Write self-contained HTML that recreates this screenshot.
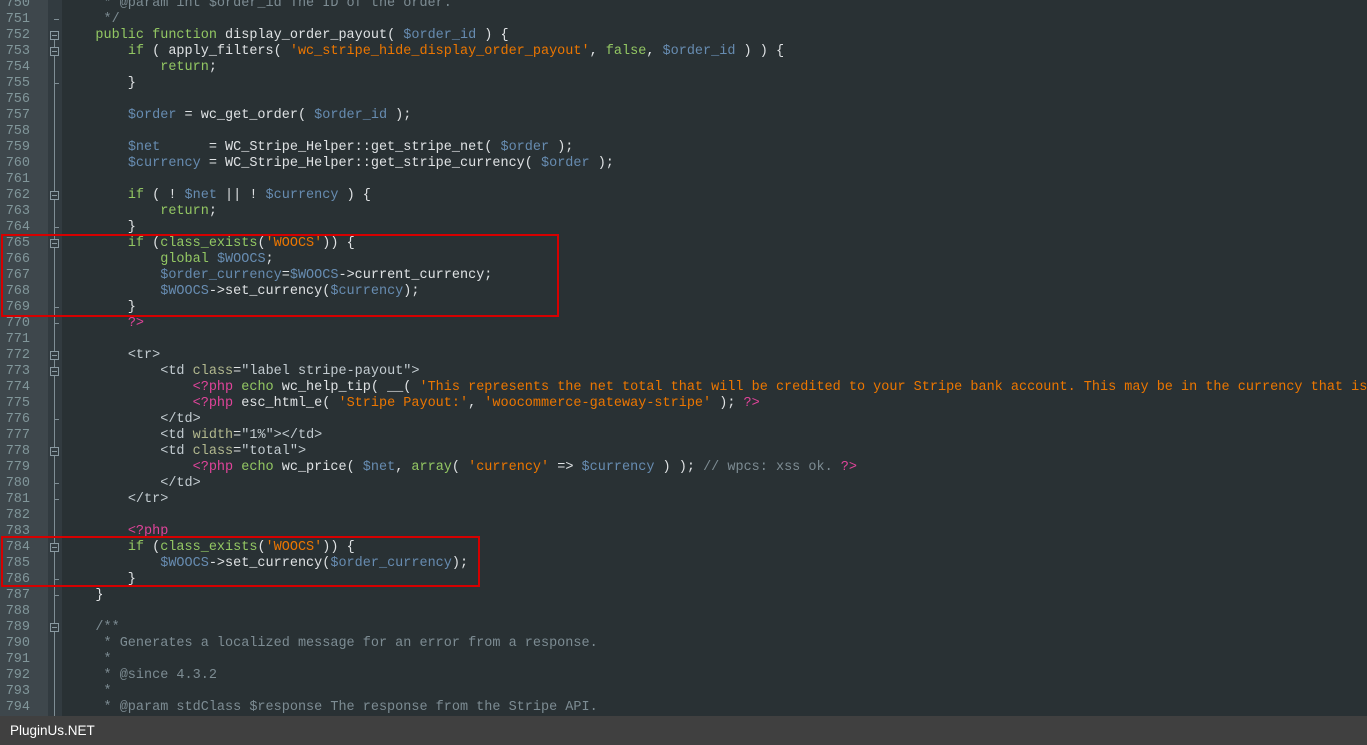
<!DOCTYPE html>
<html><head><meta charset="utf-8"><style>
body{margin:0;width:1367px;height:745px;overflow:hidden;background:#293134;position:relative;font-family:"Liberation Mono",monospace;font-size:13.5px}
.g1{position:absolute;left:0;top:0;width:48px;height:716px;background:#3e474c}
.g2{position:absolute;left:48px;top:0;width:14px;height:716px;background:#323b40}
.wrap{position:absolute;left:0;top:2px;width:1367px;height:714px}
.n{position:absolute;left:0;width:30px;text-align:right;color:#81969a;height:16px;line-height:16px}
.l{position:absolute;left:63px;white-space:pre;color:#dfe2e4;height:16px;line-height:16px}
.k{color:#93c763}.v{color:#678cb1}.s{color:#ec7600}.c{color:#7d8c93}.p{color:#e0449a}.t{color:#c3ccd1}.a{color:#b2b88e}
.fold{position:absolute;left:50px;width:9px;height:9px;border:1px solid #8a9aa2;box-sizing:border-box;background:#323b40}
.fold:after{content:"";position:absolute;left:1px;top:3px;width:5px;height:1px;background:#8a9aa2}
.vl{position:absolute;left:54px;width:1px;background:#7f8e95}
.tick{position:absolute;left:54px;width:5px;height:1px;background:#7f8e95}
.box{position:absolute;border:2px solid #d60000;box-sizing:border-box}
.foot{position:absolute;left:0;top:716px;width:1367px;height:29px;background:#404040;color:#fff;font-family:"Liberation Sans",sans-serif;font-size:13.5px;line-height:29px;padding-left:10px;box-sizing:border-box}
</style></head><body>
<div class="g1"></div><div class="g2"></div>
<div class="vl" style="top:36px;height:680px"></div>
<div class="wrap">
<div class="n" style="top:-6px">750</div><div class="n" style="top:10px">751</div><div class="n" style="top:26px">752</div><div class="n" style="top:42px">753</div><div class="n" style="top:58px">754</div><div class="n" style="top:74px">755</div><div class="n" style="top:90px">756</div><div class="n" style="top:106px">757</div><div class="n" style="top:122px">758</div><div class="n" style="top:138px">759</div><div class="n" style="top:154px">760</div><div class="n" style="top:170px">761</div><div class="n" style="top:186px">762</div><div class="n" style="top:202px">763</div><div class="n" style="top:218px">764</div><div class="n" style="top:234px">765</div><div class="n" style="top:250px">766</div><div class="n" style="top:266px">767</div><div class="n" style="top:282px">768</div><div class="n" style="top:298px">769</div><div class="n" style="top:314px">770</div><div class="n" style="top:330px">771</div><div class="n" style="top:346px">772</div><div class="n" style="top:362px">773</div><div class="n" style="top:378px">774</div><div class="n" style="top:394px">775</div><div class="n" style="top:410px">776</div><div class="n" style="top:426px">777</div><div class="n" style="top:442px">778</div><div class="n" style="top:458px">779</div><div class="n" style="top:474px">780</div><div class="n" style="top:490px">781</div><div class="n" style="top:506px">782</div><div class="n" style="top:522px">783</div><div class="n" style="top:538px">784</div><div class="n" style="top:554px">785</div><div class="n" style="top:570px">786</div><div class="n" style="top:586px">787</div><div class="n" style="top:602px">788</div><div class="n" style="top:618px">789</div><div class="n" style="top:634px">790</div><div class="n" style="top:650px">791</div><div class="n" style="top:666px">792</div><div class="n" style="top:682px">793</div><div class="n" style="top:698px">794</div>

<div class="fold" style="top:29px"></div><div class="fold" style="top:45px"></div><div class="fold" style="top:189px"></div><div class="fold" style="top:237px"></div><div class="fold" style="top:349px"></div><div class="fold" style="top:365px"></div><div class="fold" style="top:445px"></div><div class="fold" style="top:541px"></div><div class="fold" style="top:621px"></div>
<div class="tick" style="top:17px"></div><div class="tick" style="top:81px"></div><div class="tick" style="top:225px"></div><div class="tick" style="top:305px"></div><div class="tick" style="top:321px"></div><div class="tick" style="top:417px"></div><div class="tick" style="top:481px"></div><div class="tick" style="top:497px"></div><div class="tick" style="top:577px"></div><div class="tick" style="top:593px"></div>

<div class="l" style="top:-6px"><span class="c">     * @param int $order_id The ID of the order.</span></div>
<div class="l" style="top:10px"><span class="c">     */</span></div>
<div class="l" style="top:26px">    <span class="k">public function</span> display_order_payout( <span class="v">$order_id</span> ) {</div>
<div class="l" style="top:42px">        <span class="k">if</span> ( apply_filters( <span class="s">'wc_stripe_hide_display_order_payout'</span>, <span class="k">false</span>, <span class="v">$order_id</span> ) ) {</div>
<div class="l" style="top:58px">            <span class="k">return</span>;</div>
<div class="l" style="top:74px">        }</div>
<div class="l" style="top:106px">        <span class="v">$order</span> = wc_get_order( <span class="v">$order_id</span> );</div>
<div class="l" style="top:138px">        <span class="v">$net</span>      = WC_Stripe_Helper::get_stripe_net( <span class="v">$order</span> );</div>
<div class="l" style="top:154px">        <span class="v">$currency</span> = WC_Stripe_Helper::get_stripe_currency( <span class="v">$order</span> );</div>
<div class="l" style="top:186px">        <span class="k">if</span> ( ! <span class="v">$net</span> || ! <span class="v">$currency</span> ) {</div>
<div class="l" style="top:202px">            <span class="k">return</span>;</div>
<div class="l" style="top:218px">        }</div>
<div class="l" style="top:234px">        <span class="k">if</span> (<span class="k">class_exists</span>(<span class="s">'WOOCS'</span>)) {</div>
<div class="l" style="top:250px">            <span class="k">global</span> <span class="v">$WOOCS</span>;</div>
<div class="l" style="top:266px">            <span class="v">$order_currency</span>=<span class="v">$WOOCS</span>-&gt;current_currency;</div>
<div class="l" style="top:282px">            <span class="v">$WOOCS</span>-&gt;set_currency(<span class="v">$currency</span>);</div>
<div class="l" style="top:298px">        }</div>
<div class="l" style="top:314px">        <span class="p">?&gt;</span></div>
<div class="l" style="top:346px">        <span class="t">&lt;tr&gt;</span></div>
<div class="l" style="top:362px">            <span class="t">&lt;td</span> <span class="a">class</span>=<span class="t">"label stripe-payout"&gt;</span></div>
<div class="l" style="top:378px">                <span class="p">&lt;?php</span> <span class="k">echo</span> wc_help_tip( __( <span class="s">'This represents the net total that will be credited to your Stripe bank account. This may be in the currency that is s</span></div>
<div class="l" style="top:394px">                <span class="p">&lt;?php</span> esc_html_e( <span class="s">'Stripe Payout:'</span>, <span class="s">'woocommerce-gateway-stripe'</span> ); <span class="p">?&gt;</span></div>
<div class="l" style="top:410px">            <span class="t">&lt;/td&gt;</span></div>
<div class="l" style="top:426px">            <span class="t">&lt;td</span> <span class="a">width</span>=<span class="t">"1%"&gt;&lt;/td&gt;</span></div>
<div class="l" style="top:442px">            <span class="t">&lt;td</span> <span class="a">class</span>=<span class="t">"total"&gt;</span></div>
<div class="l" style="top:458px">                <span class="p">&lt;?php</span> <span class="k">echo</span> wc_price( <span class="v">$net</span>, <span class="k">array</span>( <span class="s">'currency'</span> =&gt; <span class="v">$currency</span> ) ); <span class="c">// wpcs: xss ok.</span> <span class="p">?&gt;</span></div>
<div class="l" style="top:474px">            <span class="t">&lt;/td&gt;</span></div>
<div class="l" style="top:490px">        <span class="t">&lt;/tr&gt;</span></div>
<div class="l" style="top:522px">        <span class="p">&lt;?php</span></div>
<div class="l" style="top:538px">        <span class="k">if</span> (<span class="k">class_exists</span>(<span class="s">'WOOCS'</span>)) {</div>
<div class="l" style="top:554px">            <span class="v">$WOOCS</span>-&gt;set_currency(<span class="v">$order_currency</span>);</div>
<div class="l" style="top:570px">        }</div>
<div class="l" style="top:586px">    }</div>
<div class="l" style="top:618px"><span class="c">    /**</span></div>
<div class="l" style="top:634px"><span class="c">     * Generates a localized message for an error from a response.</span></div>
<div class="l" style="top:650px"><span class="c">     *</span></div>
<div class="l" style="top:666px"><span class="c">     * @since 4.3.2</span></div>
<div class="l" style="top:682px"><span class="c">     *</span></div>
<div class="l" style="top:698px"><span class="c">     * @param stdClass $response The response from the Stripe API.</span></div>
</div>
<div class="box" style="left:1px;top:234px;width:558px;height:83px"></div>
<div class="box" style="left:1px;top:536px;width:479px;height:51px"></div>
<div class="foot">PluginUs.NET</div>
</body></html>
